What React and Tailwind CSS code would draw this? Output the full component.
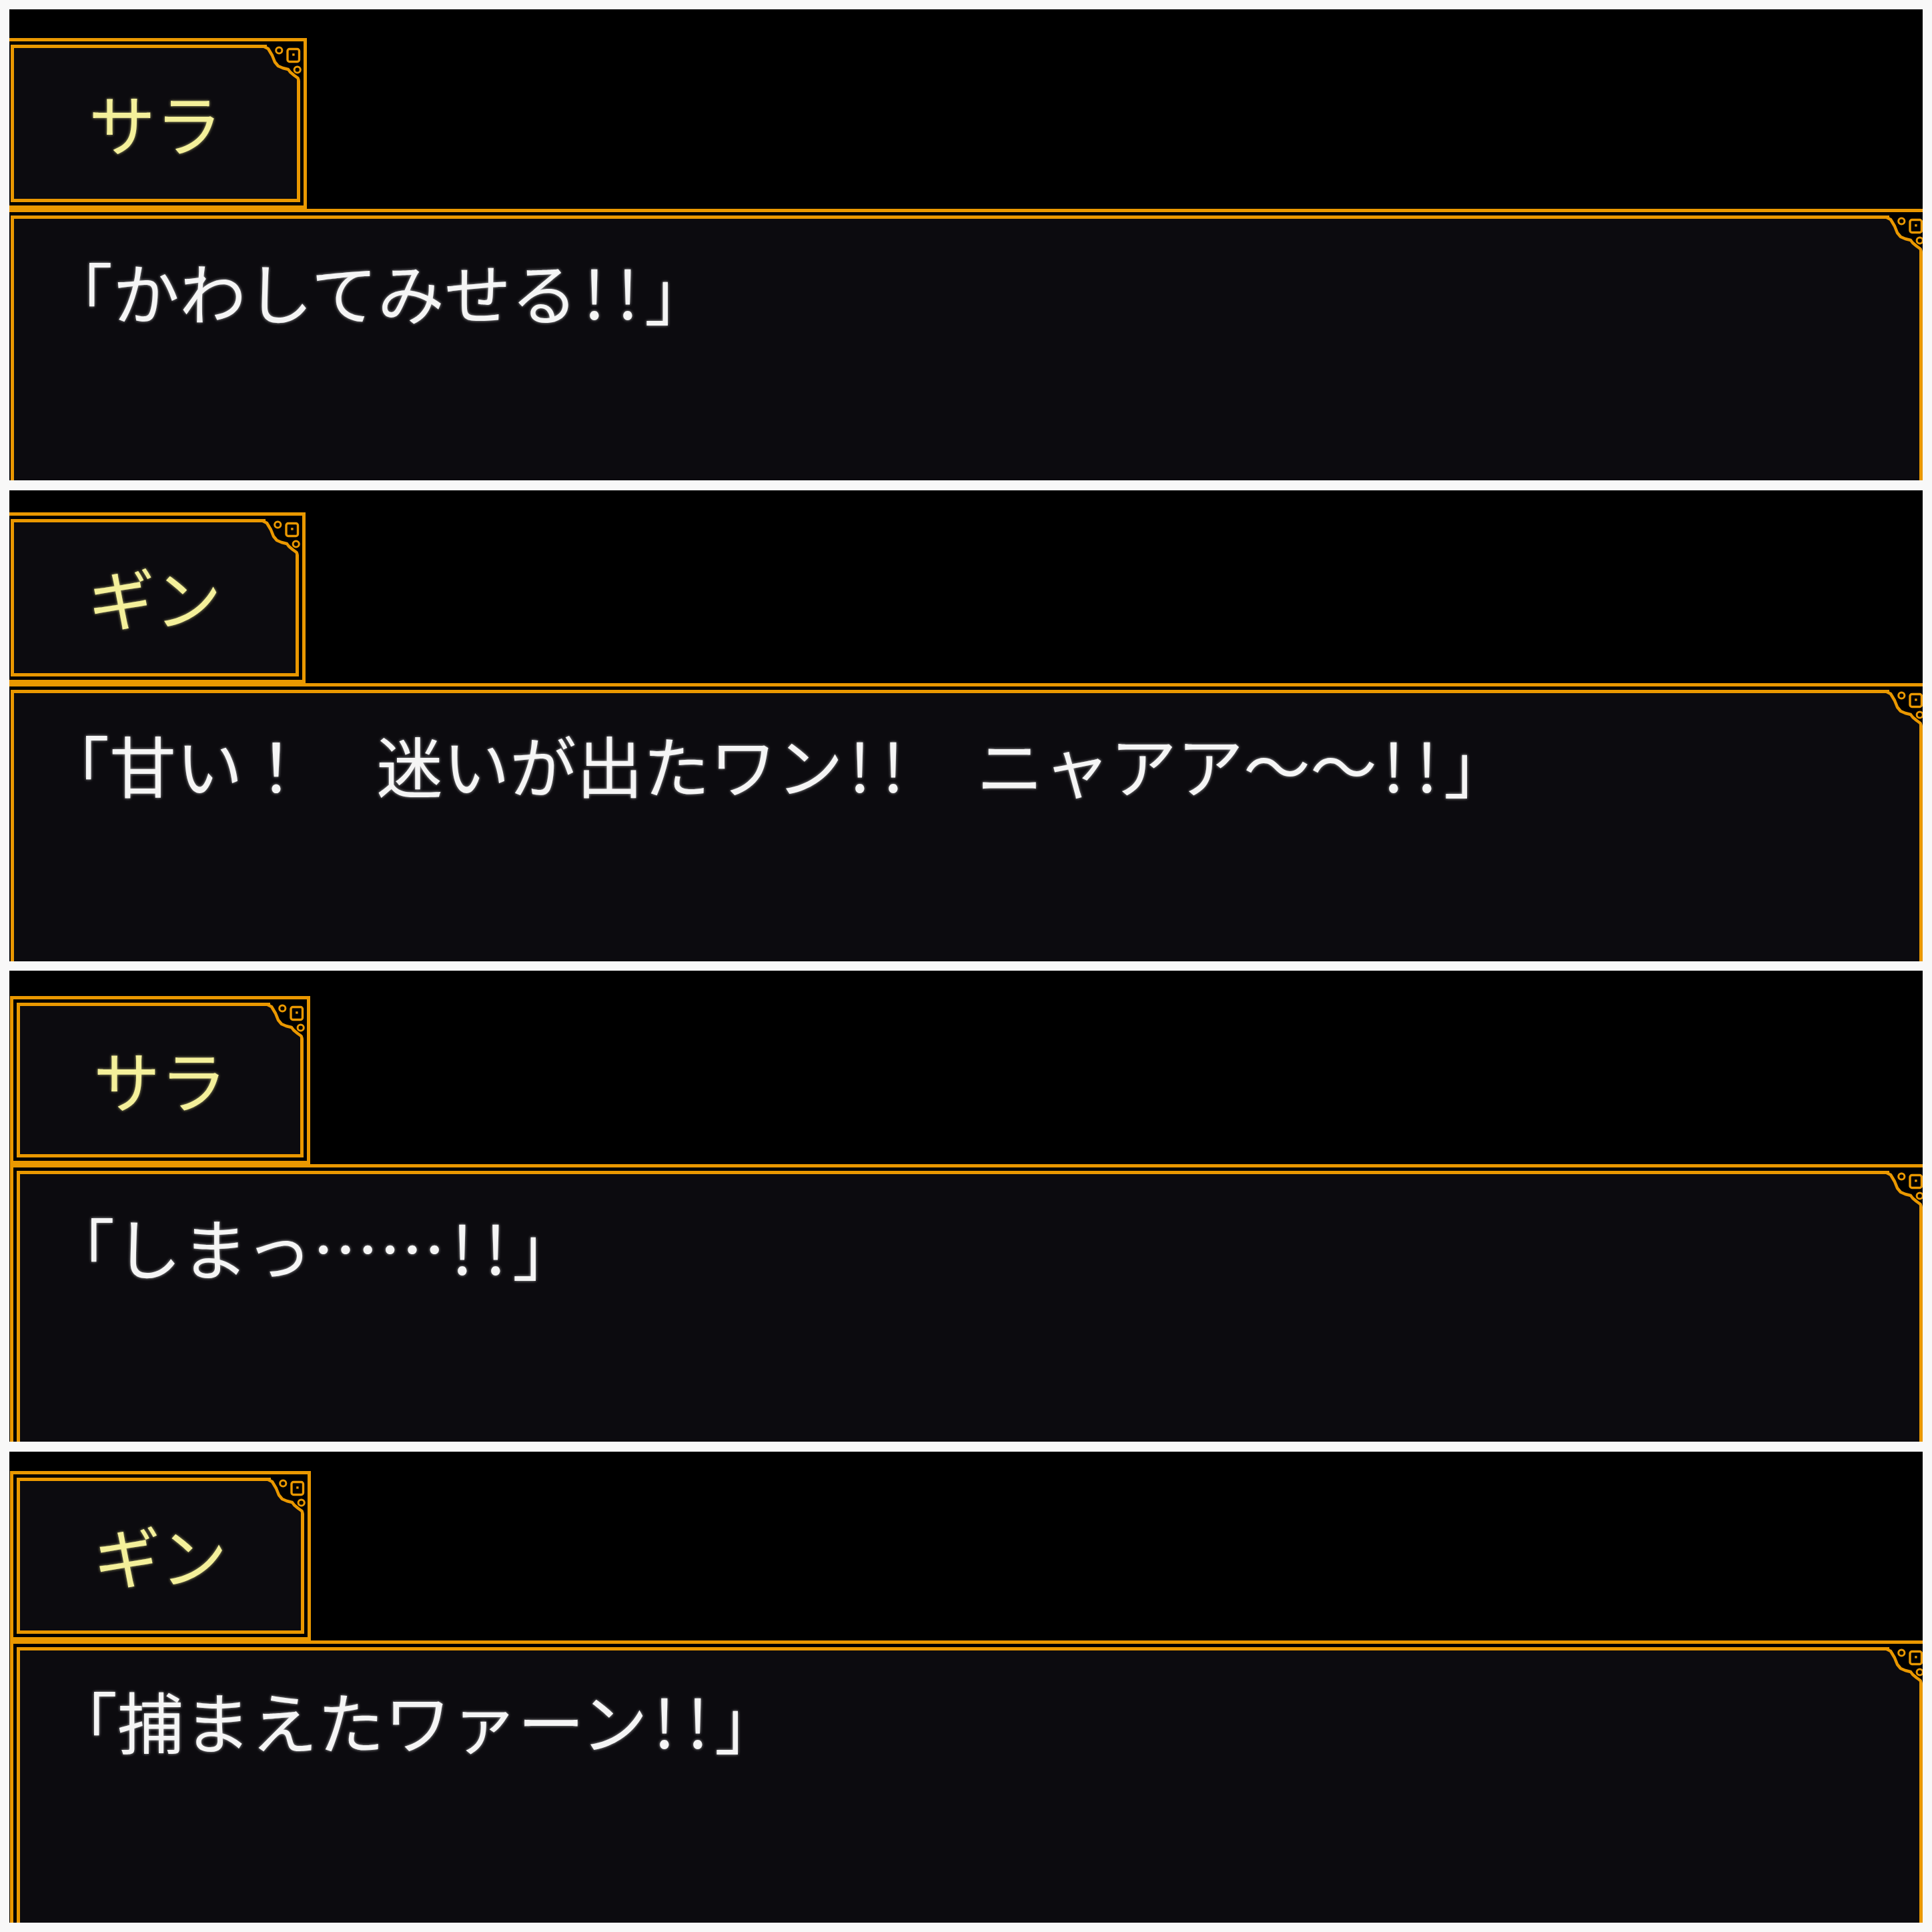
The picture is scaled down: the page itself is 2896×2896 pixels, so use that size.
import React from "react";

function Ornament() {
  const P =
    "-55,2.5 -48,6 -42,16 -38,26 -33,32 -26,35 -18,37 -15,41 -9,46 -3.5,50 -2.5,53 -2.5,64";
  return (
    <svg
      className="absolute top-[-5px] right-[-5px] overflow-visible"
      width="58"
      height="66"
      viewBox="-58 0 58 66"
    >
      <polygon
        points="-50,-0.5 0.5,-0.5 0.5,54 -2.5,53 -3.5,50 -9,46 -15,41 -18,37 -26,35 -33,32 -38,26 -42,16 -48,6 -50,2.5"
        fill="#000"
      />
      <polyline
        points={P}
        fill="none"
        stroke="#ea9800"
        strokeWidth="4.5"
        strokeLinejoin="round"
      />
      <circle cx="-31.7" cy="8.5" r="4.6" fill="none" stroke="#ea9800" strokeWidth="3" />
      <rect x="-19" y="6.5" width="17.5" height="19" rx="3" fill="none" stroke="#ea9800" strokeWidth="3.4" />
      <rect x="-11.8" y="13.2" width="3.4" height="3.4" fill="#ea9800" />
      <circle cx="-4.3" cy="37.5" r="4.6" fill="none" stroke="#ea9800" strokeWidth="3" />
    </svg>
  );
}

function H({ c }) {
  return <span className="inline-block w-[0.5em] text-center">{c}</span>;
}

const panels = [
  {
    name: "サラ",
    outer: "",
    wrap: "ml-[-8px] pt-[43px]",
    nameBox: "w-[454px] h-[256px]",
    dialog: "w-[2886px]",
    textPad: "pl-[48px] pt-[58px]",
    text: (
      <>
        「かわしてみせる<H c="!" />
        <H c="!" />」
      </>
    ),
  },
  {
    name: "ギン",
    outer: "mt-[15px]",
    wrap: "ml-[-8px] pt-[33px]",
    nameBox: "w-[452px] h-[256px]",
    dialog: "w-[2886px]",
    textPad: "pl-[43px] pt-[56px]",
    text: (
      <>
        「甘い！　迷いが出たワン<H c="!" />
        <H c="!" />　ニャアア～～<H c="!" />
        <H c="!" />」
      </>
    ),
  },
  {
    name: "サラ",
    outer: "mt-[14px]",
    wrap: "ml-[1px] pt-[38px]",
    nameBox: "w-[450px] h-[252px]",
    dialog: "w-[2877px]",
    textPad: "pl-[42px] pt-[58px]",
    text: (
      <>
        「しまっ……<H c="!" />
        <H c="!" />」
      </>
    ),
  },
  {
    name: "ギン",
    outer: "mt-[15px]",
    wrap: "ml-[1px] pt-[29px]",
    nameBox: "w-[451px] h-[254px]",
    dialog: "w-[2877px]",
    textPad: "pl-[46px] pt-[54px]",
    text: (
      <>
        「捕まえたワァーン<H c="!" />
        <H c="!" />」
      </>
    ),
  },
];

function Panel({ p }) {
  return (
    <div className={`w-[2868px] h-[706px] shrink-0 bg-black overflow-hidden ${p.outer}`}>
      <div className={`flex flex-col ${p.wrap}`}>
        <div className={`${p.nameBox} border-[5px] border-[#ea9800] p-[5px] bg-black`}>
          <div className="relative h-full border-[5px] border-[#ea9800] bg-[#0c0b0f] flex items-center justify-center pb-[4px]">
            <span className="text-[100px] leading-none font-normal text-[#f4f09a] [text-shadow:0_0_4px_rgba(244,240,154,0.7)] font-['Noto_Sans_CJK_JP',sans-serif] whitespace-pre">
              {p.name}
            </span>
            <Ornament />
          </div>
        </div>
        <div className={`${p.dialog} h-[520px] border-[5px] border-[#ea9800] p-[5px] bg-black`}>
          <div className={`relative h-full border-[5px] border-[#ea9800] bg-[#0c0b0f] ${p.textPad}`}>
            <div className="text-[100px] leading-none font-normal text-[#f5f5f5] [text-shadow:0_0_4px_rgba(255,255,255,0.65)] font-['Noto_Sans_CJK_JP',sans-serif] whitespace-pre">
              {p.text}
            </div>
            <Ornament />
          </div>
        </div>
      </div>
    </div>
  );
}

export default function App() {
  return (
    <div className="w-[2896px] h-[2896px] bg-[#f8f8f8] pt-[14px] pl-[14px] flex flex-col">
      {panels.map((p, i) => (
        <Panel key={i} p={p} />
      ))}
    </div>
  );
}
